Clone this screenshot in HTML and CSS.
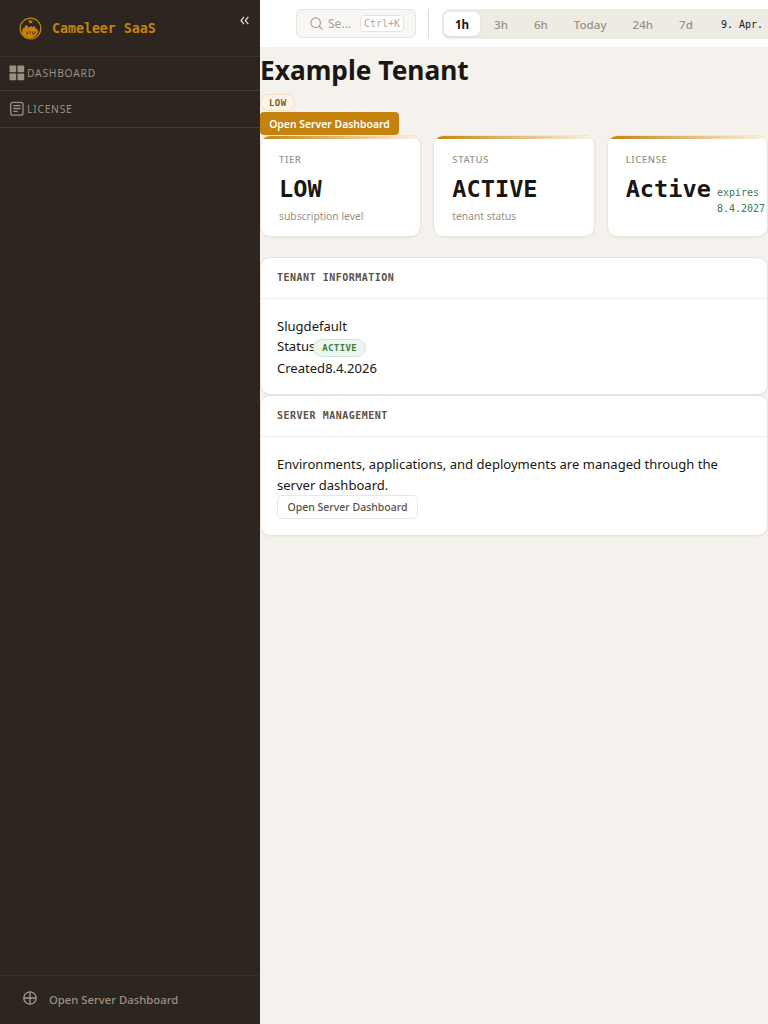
FILE: index.html
```html
<!DOCTYPE html>
<html lang="en">
<head>
<meta charset="utf-8">
<title>Cameleer SaaS</title>
<link rel="stylesheet" href="styles.css">
</head>
<body>
<div class="app">
  <aside class="sidebar">
    <div class="brand">
      <svg class="logo" width="23" height="23" viewBox="0 0 24 24">
        <circle cx="12" cy="12" r="10.800" fill="none" stroke="#c6820e" stroke-width="1.300"/>
        <path d="M3.200 14.500 4 11.800l1.800-.6.700-2.300 1.500-.4 1.200.6.500 2.400 1.800-1.500 1.300-.4 1.200 1.200 1.500-1.500 1.300.8.500 2 1.800.6 1 2.300-1.500 3.500-3.300 2.900-3.100.800-3.500-.500-3.300-1.800-2-2.800z" fill="#c6820e"/>
        <path d="M12 2.800l.9 1.500 1.800-.3-1.300 1.300.6 1.500-2-.9-1.500.8.500-1.600-1.500-1z" fill="#c6820e"/>
        <path d="M8.500 15v3.500M11.500 14.500v3M14.500 15v3.500M17 15l-1 3" stroke="#2c2520" stroke-width=".9" fill="none"/>
      </svg>
      <span class="brand-name">Cameleer SaaS</span>
      <svg class="collapse" width="9" height="9" viewBox="0 0 9 9" fill="none" stroke="#e4dfd6" stroke-width="1.200">
        <path d="M4 .8 1 4.500l3 3.700M8.300 .8 5.300 4.500l3 3.700"/>
      </svg>
    </div>
    <nav class="nav">
      <a class="nav-item">
        <svg width="16" height="16" viewBox="0 0 16 16" fill="#9a9184"><rect x="0.500" y="0.500" width="6.700" height="6.700" rx="0.800"/><rect x="8.500" y="0.500" width="6.700" height="6.700" rx="0.800"/><rect x="0.500" y="8.500" width="6.700" height="6.700" rx="0.800"/><rect x="8.500" y="8.500" width="6.700" height="6.700" rx="0.800"/></svg>
        <span>DASHBOARD</span>
      </a>
      <a class="nav-item nav-item-last">
        <svg width="16" height="16" viewBox="0 0 16 16" fill="none" stroke="#9a9184" stroke-width="1.300"><rect x="1.700" y="1.300" width="12.300" height="12.800" rx="2.200"/><path d="M4.300 4.700h7.200M4.300 7.500h7.200M4.300 10.400h4.400"/></svg>
        <span>LICENSE</span>
      </a>
    </nav>
    <div class="side-foot">
      <svg width="14" height="14" viewBox="0 0 14 14" fill="none" stroke="#a39a8d" stroke-width="1.300"><circle cx="7" cy="7" r="6.200"/><path d="M7 .8v12.400M.8 7h12.400"/></svg>
      <span>Open Server Dashboard</span>
    </div>
  </aside>
  <div class="main">
    <header class="topbar">
      <div class="search">
        <svg width="13" height="13" viewBox="0 0 13 13" fill="none" stroke="#a89f92" stroke-width="1.100"><circle cx="5.700" cy="5.700" r="4.800"/><path d="m9.200 9.200 3.300 3.300"/></svg>
        <span class="search-text">Se...</span>
        <kbd class="kbd">Ctrl+K</kbd>
      </div>
      <div class="divider"></div>
      <div class="ranges">
        <span class="range active">1h</span>
        <span class="range">3h</span>
        <span class="range">6h</span>
        <span class="range">Today</span>
        <span class="range">24h</span>
        <span class="range">7d</span>
        <span class="range-date">9. Apr. 2026</span>
      </div>
    </header>
    <main class="content">
      <h1 class="title">Example Tenant</h1>
      <div class="line"><span class="badge badge-low">LOW</span></div>
      <div class="line"><button class="btn-primary">Open Server Dashboard</button></div>
      <section class="stats">
        <div class="stat">
          <div class="stat-label">TIER</div>
          <div class="stat-value">LOW</div>
          <div class="stat-sub">subscription level</div>
        </div>
        <div class="stat">
          <div class="stat-label">STATUS</div>
          <div class="stat-value">ACTIVE</div>
          <div class="stat-sub">tenant status</div>
        </div>
        <div class="stat">
          <div class="stat-label">LICENSE</div>
          <div class="stat-row">
            <div class="stat-value">Active</div>
            <div class="stat-exp">expires 8.4.2027</div>
          </div>
        </div>
      </section>
      <section class="card">
        <div class="card-head">TENANT INFORMATION</div>
        <div class="card-body">
          <div class="row">Slugdefault</div>
          <div class="row row-status">Status<span class="badge badge-ok">ACTIVE</span></div>
          <div class="row">Created8.4.2026</div>
        </div>
      </section>
      <section class="card">
        <div class="card-head">SERVER MANAGEMENT</div>
        <div class="card-body card-body-server">
          <p class="para">Environments, applications, and deployments are managed through the server dashboard.</p>
          <button class="btn-plain">Open Server Dashboard</button>
        </div>
      </section>
    </main>
  </div>
</div>
</body>
</html>
```
FILE: styles.css
```css
* { box-sizing: border-box; }
html, body { margin: 0; height: 100%; overflow: hidden; }
body { font-family: "Noto Sans", "Open Sans", sans-serif; background: #f5f2ed; color: #1a1612; }
.app { display: flex; width: 768px; height: 1024px; overflow: hidden; }

.sidebar { flex: 0 0 260px; background: #2c2520; display: flex; flex-direction: column; position: relative; }
.brand { height: 57px; display: flex; align-items: center; padding: 0 0 0 19px; border-bottom: 1px solid #38312b; position: relative; }
.logo { flex: none; }
.brand-name { margin-left: 10px; font: 700 13.250px "DejaVu Sans Mono", monospace; color: #c6820e; }
.collapse { position: absolute; left: 240px; top: 16px; }
.nav { display: flex; flex-direction: column; }
.nav-item { height: 34px; display: flex; align-items: center; gap: 2px; padding: 0 0 1px 9px; font-size: 10.300px; letter-spacing: 0.750px; color: #9a9184; border-bottom: 1px solid #423b35; }
.nav-item-last { height: 37px; padding-bottom: 0; }
.side-foot { margin-top: auto; height: 49px; border-top: 1px solid #38312b; display: flex; align-items: center; gap: 12px; padding: 0 0 2px 23px; font-size: 11.300px; font-weight: 500; color: #9a9184; }
.side-foot svg { margin-top: -3px; }

.main { flex: 1 1 auto; min-width: 0; display: flex; flex-direction: column; }
.topbar { height: 47px; background: #fff; display: flex; align-items: flex-start; padding: 9px 0 0 36px; flex: none; overflow: hidden; }
.search { flex: none; width: 120px; height: 29px; display: flex; align-items: center; border: 1px solid #e8e3db; border-radius: 6px; background: #f9f7f3; padding: 0 12px 0 13px; color: #a89f92; font-size: 12px; }
.search-text { margin-left: 5px; }
.kbd { margin-left: auto; margin-right: -1px; font: 10px "DejaVu Sans Mono", monospace; color: #b3aa9d; background: #fff; border: 1px solid #e8e3db; border-radius: 4px; padding: 2px 3px; }
.divider { flex: none; width: 1px; height: 29px; background: #e0dbd2; margin: 0 13px 0 12px; }
.ranges { flex: none; display: flex; align-items: flex-start; height: 30px; padding: 3px 2px; background: #eeeae4; border-radius: 8px; font-size: 11.600px; font-weight: 500; color: #9a9184; }
.range { padding: 0 13px; height: 24px; display: flex; align-items: center; }
.range.active { background: #fff; color: #1a1612; border-radius: 6px; font-weight: 700; box-shadow: 0 1px 2px rgba(0,0,0,.08); width: 36px; padding: 0; justify-content: center; margin-right: 1px; }
.range-date { font: 10px "DejaVu Sans Mono", monospace; color: #1a1612; margin-left: 15px; height: 24px; display: flex; align-items: center; white-space: nowrap; }

.content { flex: 1 1 auto; }
.title { margin: 8px 0 0; font-size: 26.300px; line-height: 30px; font-weight: 700; color: #1a1612; }
.line { display: flex; }
.badge { display: inline-flex; align-items: center; height: 17px; border-radius: 9px; font: 700 9px "DejaVu Sans Mono", monospace; padding: 0 8px; letter-spacing: .4px; }
.badge-low { background: #fdf6e8; border: 1px solid #f3dfba; color: #7a5b20; margin-top: 9px; }
.btn-primary { display: block; height: 23px; width: 139px; border: 0; padding: 0; border-radius: 4px; background: #c6820e; color: #fff; font: 600 10.400px "Noto Sans", sans-serif; margin-top: 1px; }

.stats { display: grid; grid-template-columns: repeat(3, 1fr); gap: 12px; margin-bottom: 20px; }
.stat { height: 102px; background: #fff; border: 1px solid #e8e3db; border-radius: 10px; padding: 18px 18px 0; position: relative; overflow: hidden; box-shadow: 0 1px 2px rgba(0,0,0,.04); }
.stat::before { content: ""; position: absolute; left: 0; right: 0; top: 0; height: 3px; background: linear-gradient(90deg, #c6820e, #fbf3e4); }
.stat-label { font-size: 9.500px; line-height: 12px; letter-spacing: .6px; color: #9a8f82; font-weight: 500; }
.stat-value { font: 700 23.600px/28px "DejaVu Sans Mono", monospace; color: #1a1612; margin-top: 9px; }
.stat-sub { font-size: 10.300px; line-height: 14px; color: #9a8f82; margin-top: 6px; }
.stat-row { display: flex; align-items: flex-start; gap: 6px; }
.stat-exp { font: 10px/16px "DejaVu Sans Mono", monospace; color: #3d7c47; margin-top: 19px; }

.card { background: #fff; border: 1px solid #e8e3db; border-radius: 10px; box-shadow: 0 1px 2px rgba(0,0,0,.04); }
.card-head { height: 41px; padding: 0 16px 2px; display: flex; align-items: center; font: 700 10px "DejaVu Sans Mono", monospace; letter-spacing: .5px; color: #5c5246; border-bottom: 1px solid #f0ece6; }
.card-body { padding: 17px 16px 15px; font-size: 13.050px; line-height: 21px; }
.card-body-server { padding-bottom: 16px; }
.row { display: flex; align-items: center; height: 21px; }
.row-status { align-items: flex-start; line-height: 19px; }
.badge-ok { background: #edf6ef; border: 1px solid #cfe5d4; color: #3d7c47; padding: 0 8px; height: 18px; margin: 2px 0 0 -2px; }
.para { margin: 0 0 -1px; }
.btn-plain { display: block; height: 24px; width: 141px; padding: 0; background: #fff; border: 1px solid #ebe7e0; border-radius: 5px; color: #5c5246; font: 500 10.500px "Noto Sans", sans-serif; }
```
